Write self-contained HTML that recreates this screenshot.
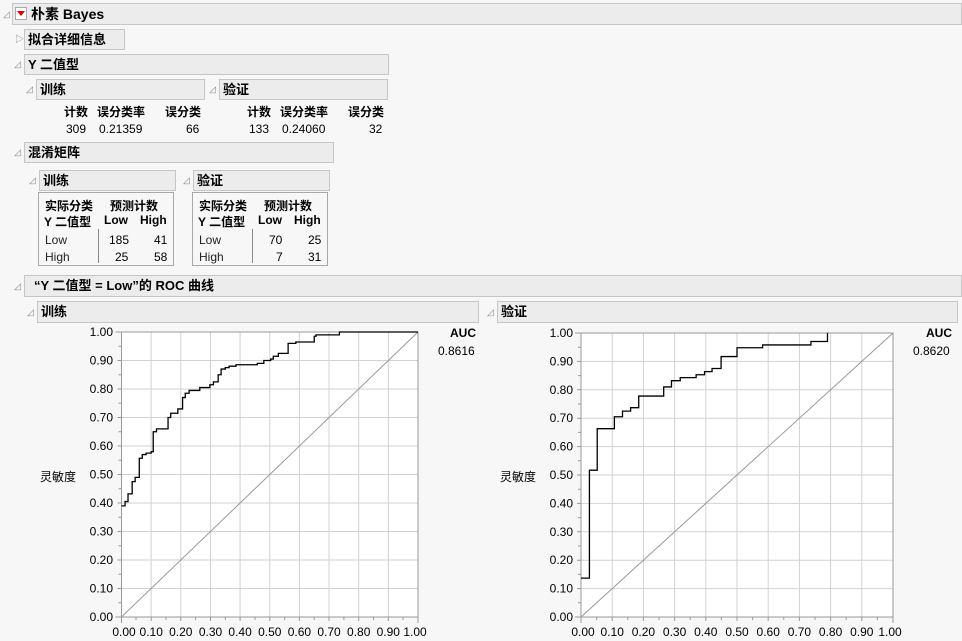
<!DOCTYPE html>
<html><head><meta charset="utf-8">
<style>
body{margin:0;width:962px;height:641px;background:#f7f7f7;font-family:"Liberation Sans","Noto Sans CJK SC",sans-serif;font-size:12px;color:#000;position:relative;overflow:hidden}
.h{position:absolute;background:#ececec;border:1px solid #c6c6c6;box-sizing:border-box;font-weight:bold;font-size:13px;line-height:19px;padding-left:3px}
.t{position:absolute;font-size:9px;color:#888;line-height:10px}
.a{position:absolute;white-space:nowrap}
.b{font-weight:bold}
.tb{position:absolute;border:1px solid #a8a8a8;box-sizing:border-box;background:#f7f7f7}
</style></head><body>
<div class="h" style="left:12px;top:3px;width:950px;height:22px;font-size:14px;line-height:20px;padding-left:18px">朴素 Bayes</div>
<div style="position:absolute;left:15px;top:7px;width:12px;height:13px;border:1px solid #aaa;background:#fff;box-sizing:border-box"></div>
<div style="position:absolute;left:17px;top:11px;width:0;height:0;border-left:4px solid transparent;border-right:4px solid transparent;border-top:5px solid #d00"></div>
<div class="t" style="left:3px;top:9px">◿</div>
<div class="h" style="left:24px;top:29px;width:101px;height:21px">拟合详细信息</div>
<div class="t" style="left:15px;top:34px">▷</div>
<div class="h" style="left:24px;top:54px;width:365px;height:21px">Y 二值型</div>
<div class="t" style="left:14px;top:59px">◿</div>
<div class="h" style="left:36px;top:79px;width:169px;height:21px">训练</div>
<div class="t" style="left:26px;top:84px">◿</div>
<div class="h" style="left:219px;top:79px;width:169px;height:21px">验证</div>
<div class="t" style="left:209px;top:84px">◿</div>
<div class="a b" style="left:64px;top:103px">计数</div><div class="a b" style="left:97px;top:103px">误分类率</div><div class="a b" style="left:165px;top:103px">误分类</div>
<div class="a" style="left:66px;top:122px">309</div><div class="a" style="left:99px;top:122px">0.21359</div><div class="a" style="left:186px;top:122px">66</div>
<div class="a b" style="left:247px;top:103px">计数</div><div class="a b" style="left:280px;top:103px">误分类率</div><div class="a b" style="left:348px;top:103px">误分类</div>
<div class="a" style="left:249px;top:122px">133</div><div class="a" style="left:282px;top:122px">0.24060</div><div class="a" style="left:369px;top:122px">32</div>
<div class="h" style="left:24px;top:142px;width:310px;height:21px">混淆矩阵</div>
<div class="t" style="left:14px;top:147px">◿</div>
<div class="h" style="left:39px;top:170px;width:137px;height:21px">训练</div>
<div class="t" style="left:29px;top:175px">◿</div>
<div class="h" style="left:193px;top:170px;width:137px;height:21px">验证</div>
<div class="t" style="left:183px;top:175px">◿</div>
<div class="tb" style="left:38px;top:192px;width:136px;height:74px"></div>
<div class="a b" style="left:45px;top:197px">实际分类</div><div class="a b" style="left:110px;top:197px">预测计数</div>
<div class="a b" style="left:44px;top:213px">Y 二值型</div><div class="a b" style="left:104px;top:213px">Low</div><div class="a b" style="left:140px;top:213px">High</div>
<div style="position:absolute;left:98px;top:229px;width:1px;height:34px;background:#888"></div>
<div class="a" style="left:45px;top:233px;color:#222">Low</div><div class="a" style="left:109px;top:233px">185</div><div class="a" style="left:154px;top:233px">41</div>
<div class="a" style="left:45px;top:250px;color:#222">High</div><div class="a" style="left:115px;top:250px">25</div><div class="a" style="left:154px;top:250px">58</div>
<div class="tb" style="left:192px;top:192px;width:136px;height:74px"></div>
<div class="a b" style="left:199px;top:197px">实际分类</div><div class="a b" style="left:264px;top:197px">预测计数</div>
<div class="a b" style="left:198px;top:213px">Y 二值型</div><div class="a b" style="left:258px;top:213px">Low</div><div class="a b" style="left:294px;top:213px">High</div>
<div style="position:absolute;left:252px;top:229px;width:1px;height:34px;background:#888"></div>
<div class="a" style="left:199px;top:233px;color:#222">Low</div><div class="a" style="left:269px;top:233px">70</div><div class="a" style="left:308px;top:233px">25</div>
<div class="a" style="left:199px;top:250px;color:#222">High</div><div class="a" style="left:276px;top:250px">7</div><div class="a" style="left:308px;top:250px">31</div>
<div class="h" style="left:24px;top:275px;width:938px;height:22px;padding-left:9px">“Y 二值型 = Low”的 ROC 曲线</div>
<div class="t" style="left:14px;top:281px">◿</div>
<div class="h" style="left:37px;top:301px;width:442px;height:22px">训练</div>
<div class="t" style="left:27px;top:307px">◿</div>
<div class="h" style="left:497px;top:301px;width:461px;height:22px">验证</div>
<div class="t" style="left:487px;top:307px">◿</div>
<div class="a b" style="left:450px;top:326px">AUC</div><div class="a" style="left:438px;top:344px">0.8616</div>
<div class="a b" style="left:926px;top:326px">AUC</div><div class="a" style="left:913px;top:344px">0.8620</div>
<div class="a" style="left:40px;top:468px">灵敏度</div>
<div class="a" style="left:500px;top:468px">灵敏度</div>
<svg width="962" height="641" style="position:absolute;left:0;top:0" font-family="Liberation Sans" font-size="12">
<defs>
<g id="grid">
<rect x="0" y="0" width="1" height="1" fill="#fff"/>
<path vector-effect="non-scaling-stroke" stroke="#d2d2d2" stroke-width="1" fill="none" d="M.1 0V1M.2 0V1M.3 0V1M.4 0V1M.5 0V1M.6 0V1M.7 0V1M.8 0V1M.9 0V1M0 .1H1M0 .2H1M0 .3H1M0 .4H1M0 .5H1M0 .6H1M0 .7H1M0 .8H1M0 .9H1"/>
<path vector-effect="non-scaling-stroke" stroke="#999" stroke-width="1" fill="none" d="M0 0L1 1"/>
<rect vector-effect="non-scaling-stroke" x="0" y="0" width="1" height="1" fill="none" stroke="#999"/>
</g>
</defs>
<g transform="translate(121.5,617) scale(296.5,-285)">
<use href="#grid"/>
<polyline vector-effect="non-scaling-stroke" fill="none" stroke="#000" stroke-width="1.3" points="0,.39 .012,.39 .012,.405 .022,.405 .022,.432 .036,.432 .036,.475 .046,.475 .046,.49 .06,.49 .06,.557 .07,.557 .07,.57 .083,.57 .083,.575 .1,.575 .1,.58 .107,.58 .107,.65 .118,.65 .118,.66 .157,.66 .157,.70 .166,.70 .166,.715 .19,.715 .19,.73 .206,.73 .206,.77 .215,.77 .215,.785 .228,.785 .228,.795 .264,.795 .264,.805 .298,.805 .298,.815 .31,.815 .31,.825 .326,.825 .326,.85 .336,.85 .336,.87 .35,.87 .35,.875 .363,.875 .363,.88 .386,.88 .386,.885 .458,.885 .458,.89 .48,.89 .48,.90 .503,.90 .503,.905 .512,.905 .512,.915 .529,.915 .529,.925 .562,.925 .562,.96 .588,.96 .588,.965 .65,.965 .65,.985 .656,.985 .656,.99 .735,.99 .735,1 1,1"/>
</g>
<g transform="translate(581,617) scale(312,-284)">
<use href="#grid"/>
<polyline vector-effect="non-scaling-stroke" fill="none" stroke="#000" stroke-width="1.3" points="0,.137 .027,.137 .027,.517 .052,.517 .052,.663 .107,.663 .107,.705 .133,.705 .133,.725 .159,.725 .159,.737 .185,.737 .185,.778 .265,.778 .265,.81 .29,.81 .29,.832 .318,.832 .318,.843 .369,.843 .369,.853 .396,.853 .396,.864 .42,.864 .42,.875 .449,.875 .449,.917 .5,.917 .5,.948 .582,.948 .582,.958 .737,.958 .737,.97 .79,.97 .79,1"/>
</g>
<g stroke="#999" fill="none">
<path d="M121.5 617v6M151.2 617v4M180.8 617v4M210.5 617v4M240.1 617v4M269.8 617v4M299.4 617v4M329 617v4M358.7 617v4M388.3 617v4M418 617v6M136 617v3M166 617v3M195.6 617v3M225.3 617v3M255 617v3M284.6 617v3M314.2 617v3M343.9 617v3M373.5 617v3M403 617v3"/>
<path d="M121.5 617h-6M121.5 588.5h-4M121.5 560h-4M121.5 531.5h-4M121.5 503h-4M121.5 474.5h-4M121.5 446h-4M121.5 417.5h-4M121.5 389h-4M121.5 360.5h-4M121.5 332h-6M121.5 602.75h-3M121.5 574.25h-3M121.5 545.75h-3M121.5 517.25h-3M121.5 488.75h-3M121.5 460.25h-3M121.5 431.75h-3M121.5 403.25h-3M121.5 374.75h-3M121.5 346.25h-3"/>
<path d="M581 617v6M612.2 617v4M643.4 617v4M674.6 617v4M705.8 617v4M737 617v4M768.2 617v4M799.4 617v4M830.6 617v4M861.8 617v4M893 617v6M596.6 617v3M627.8 617v3M659 617v3M690.2 617v3M721.4 617v3M752.6 617v3M783.8 617v3M815 617v3M846.2 617v3M877.4 617v3"/>
<path d="M581 617h-6M581 588.6h-4M581 560.2h-4M581 531.8h-4M581 503.4h-4M581 475h-4M581 446.6h-4M581 418.2h-4M581 389.8h-4M581 361.4h-4M581 333h-6M581 602.8h-3M581 574.4h-3M581 546h-3M581 517.6h-3M581 489.2h-3M581 460.8h-3M581 432.4h-3M581 404h-3M581 375.6h-3M581 347.2h-3"/>
</g>
<g text-anchor="end" fill="#000">
<text x="113" y="336">1.00</text><text x="113" y="364.5">0.90</text><text x="113" y="393">0.80</text><text x="113" y="421.5">0.70</text><text x="113" y="450">0.60</text><text x="113" y="478.5">0.50</text><text x="113" y="507">0.40</text><text x="113" y="535.5">0.30</text><text x="113" y="564">0.20</text><text x="113" y="592.5">0.10</text><text x="113" y="621">0.00</text>
<text x="573" y="337">1.00</text><text x="573" y="365.4">0.90</text><text x="573" y="393.8">0.80</text><text x="573" y="422.2">0.70</text><text x="573" y="450.6">0.60</text><text x="573" y="479">0.50</text><text x="573" y="507.4">0.40</text><text x="573" y="535.8">0.30</text><text x="573" y="564.2">0.20</text><text x="573" y="592.6">0.10</text><text x="573" y="621">0.00</text>
</g>
<g text-anchor="middle" fill="#000">
<text x="124" y="636">0.00</text><text x="151.2" y="636">0.10</text><text x="180.8" y="636">0.20</text><text x="210.5" y="636">0.30</text><text x="240.1" y="636">0.40</text><text x="269.8" y="636">0.50</text><text x="299.4" y="636">0.60</text><text x="329" y="636">0.70</text><text x="358.7" y="636">0.80</text><text x="388.3" y="636">0.90</text><text x="415" y="636">1.00</text>
<text x="583" y="636">0.00</text><text x="612.2" y="636">0.10</text><text x="643.4" y="636">0.20</text><text x="674.6" y="636">0.30</text><text x="705.8" y="636">0.40</text><text x="737" y="636">0.50</text><text x="768.2" y="636">0.60</text><text x="799.4" y="636">0.70</text><text x="830.6" y="636">0.80</text><text x="861.8" y="636">0.90</text><text x="890" y="636">1.00</text>
</g>
</svg>
</body></html>
